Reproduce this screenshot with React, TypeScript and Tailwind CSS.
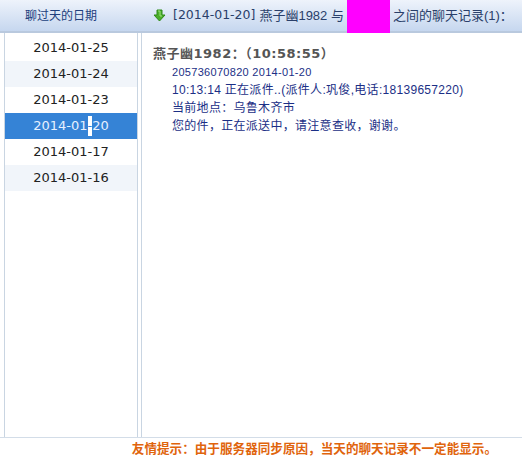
const dates = ["2014-01-25", "2014-01-24", "2014-01-23", "2014-01-20", "2014-01-17", "2014-01-16"];

const cjk = "'Liberation Sans', 'Noto Sans CJK SC', sans-serif";

function GreenArrow() {
  return (
    <svg width="13" height="13" viewBox="0 0 13 13" className="mr-[7px] shrink-0">
      <path d="M4 1h5v5h3l-5.5 6L1 6h3z" fill="#4caf2a" stroke="#2f8a18" strokeWidth="1" strokeLinejoin="round" />
      <path d="M5 2h2v5h2" fill="none" stroke="#9be07a" strokeWidth="1" />
    </svg>
  );
}

export default function App() {
  const selected = "2014-01-20";

  return (
    <div className="flex h-[461px] w-[522px] flex-col bg-white" style={{ fontFamily: cjk }}>
      {/* header */}
      <div className="flex h-[33px] shrink-0 border-b-2 border-[#b9c9de] bg-gradient-to-b from-[#eef3fb] to-[#c6d7ef] text-[12px] text-[#21407c]">
        <div className="flex w-[153px] items-center pl-[25px]">聊过天的日期</div>
        <div className="flex items-center text-[13px] text-[#2a3f6a]">
          <GreenArrow />
          <span className="font-['DejaVu_Sans'] text-[12.5px]">[2014-01-20]</span>
          <span className="ml-[4px]">燕子幽1982 与</span>
          <span className="mx-[3px] -mb-[2px] w-[43px] self-stretch bg-[#ff00ff]" />
          <span>之间的聊天记录(1)：</span>
        </div>
      </div>

      {/* body */}
      <div className="flex min-h-0 flex-1 border-b border-[#d3dde8]">
        <div className="ml-[4px] w-[134px] border-x border-[#c9d5e2] pt-[2px]">
          {dates.map((d, i) => {
            const active = d === selected;
            return (
              <div
                key={d}
                className={`flex h-[26px] items-center justify-center text-[13px] font-['DejaVu_Sans'] ${
                  active ? "bg-[#3583d6] text-[#e6f0ff]" : i % 2 === 1 ? "bg-[#f1f5fa] text-[#222]" : "text-[#222]"
                }`}
              >
                {active ? (
                  <>
                    2014-01<span className="bg-white text-[#3583d6]">-</span>20
                  </>
                ) : (
                  d
                )}
              </div>
            );
          })}
        </div>

        <div className="ml-[3px] flex-1 border-l border-[#c9d5e2] pl-[11px] pt-[11px]">
          <div className="font-['DejaVu_Sans','Noto_Sans_CJK_SC',sans-serif] text-[13px] font-bold leading-[19px] tracking-[0.5px] text-[#555]">
            燕子幽1982：（10:58:55）
          </div>
          <div className="pl-[19px] text-[12px] leading-[18px] tracking-[0.3px] text-[#1b2f86]">
            <div className="text-[11px]">205736070820 2014-01-20</div>
            <div>10:13:14 正在派件..(派件人:巩俊,电话:18139657220)</div>
            <div>当前地点：乌鲁木齐市</div>
            <div>您的件，正在派送中，请注意查收，谢谢。</div>
          </div>
        </div>
      </div>

      {/* footer */}
      <div className="flex h-[23px] shrink-0 items-center justify-end pr-[25px] text-[12.6px] font-bold text-[#e0640c]">
        友情提示：由于服务器同步原因，当天的聊天记录不一定能显示。
      </div>
    </div>
  );
}
